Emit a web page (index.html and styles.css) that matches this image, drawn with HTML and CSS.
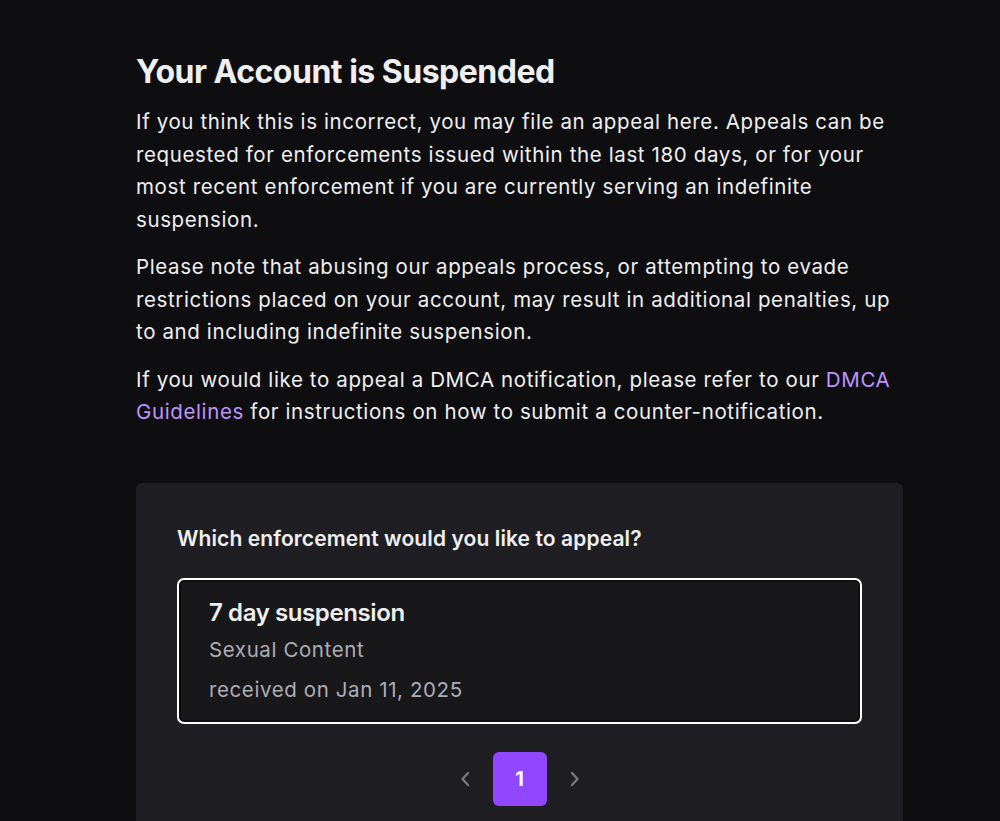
FILE: index.html
```html
<!DOCTYPE html>
<html>
<head>
<meta charset="utf-8">
<link rel="stylesheet" href="styles.css">
</head>
<body>
<main class="page">
  <h1 class="title">Your Account is Suspended</h1>
  <p class="para">If you think this is incorrect, you may file an appeal here. Appeals can be requested for enforcements issued within the last 180 days, or for your most recent enforcement if you are currently serving an indefinite suspension.</p>
  <p class="para">Please note that abusing our appeals process, or attempting to evade restrictions placed on your account, may result in additional penalties, up to and including indefinite suspension.</p>
  <p class="para">If you would like to appeal a DMCA notification, please refer to our <a class="link" href="#">DMCA Guidelines</a> for instructions on how to submit a counter-notification.</p>

  <section class="card">
    <h2 class="card-title">Which enforcement would you like to appeal?</h2>
    <div class="option">
      <div class="option-title">7 day suspension</div>
      <div class="option-sub">Sexual Content</div>
      <div class="option-sub">received on Jan 11, 2025</div>
    </div>
    <div class="pager">
      <span class="chev">
        <svg width="20" height="20" viewBox="0 0 20 20"><path d="M12 4 L6.5 10 L12 16" fill="none" stroke="currentColor" stroke-width="2.4" stroke-linecap="round" stroke-linejoin="round"/></svg>
      </span>
      <span class="page-btn">1</span>
      <span class="chev">
        <svg width="20" height="20" viewBox="0 0 20 20"><path d="M8 4 L13.5 10 L8 16" fill="none" stroke="currentColor" stroke-width="2.4" stroke-linecap="round" stroke-linejoin="round"/></svg>
      </span>
    </div>
  </section>
</main>
</body>
</html>
```
FILE: styles.css
```css
html, body {
  margin: 0;
  padding: 0;
  background: #0e0e10;
  color: #efeff1;
  font-family: Inter, "Noto Sans", "Liberation Sans", sans-serif;
}

.page {
  width: 767px;
  padding: 52px 0 0 136px;
}

.title {
  margin: 0 0 14px;
  font-size: 32px;
  line-height: 40px;
  font-weight: 700;
  letter-spacing: -0.5px;
  color: #efeff1;
}

.para {
  margin: 0 0 15px;
  font-size: 20.5px;
  line-height: 32.5px;
  letter-spacing: 0.62px;
  color: #efeff1;
}

.link {
  color: #bf94ff;
  text-decoration: none;
}

.card {
  margin-top: 54px;
  background: #1f1f23;
  border-radius: 6px;
  padding: 42px 41px 20px;
}

.card-title {
  margin: 0 0 25px;
  font-size: 21px;
  line-height: 28px;
  font-weight: 600;
  letter-spacing: 0.1px;
  color: #efeff1;
}

.option {
  border: 2px solid #ffffff;
  border-radius: 7px;
  background: #18181b;
  box-shadow: inset 0 0 0 2px #0e0e10;
  padding: 17px 30px 12px;
}

.option-title {
  font-size: 24px;
  line-height: 32px;
  font-weight: 600;
  letter-spacing: -0.4px;
  color: #efeff1;
  margin-bottom: 1px;
}

.option-sub {
  font-size: 20.5px;
  line-height: 40px;
  letter-spacing: 0.6px;
  color: #adadb8;
}

.pager {
  display: flex;
  justify-content: center;
  align-items: center;
  gap: 12px;
  margin-top: 28px;
}

.chev {
  display: flex;
  align-items: center;
  justify-content: center;
  width: 30px;
  height: 54px;
  color: #77777f;
}

.page-btn {
  display: flex;
  align-items: center;
  justify-content: center;
  width: 54px;
  height: 54px;
  border-radius: 6px;
  background: #9147ff;
  color: #ffffff;
  font-size: 20px;
  font-weight: 700;
}
```
